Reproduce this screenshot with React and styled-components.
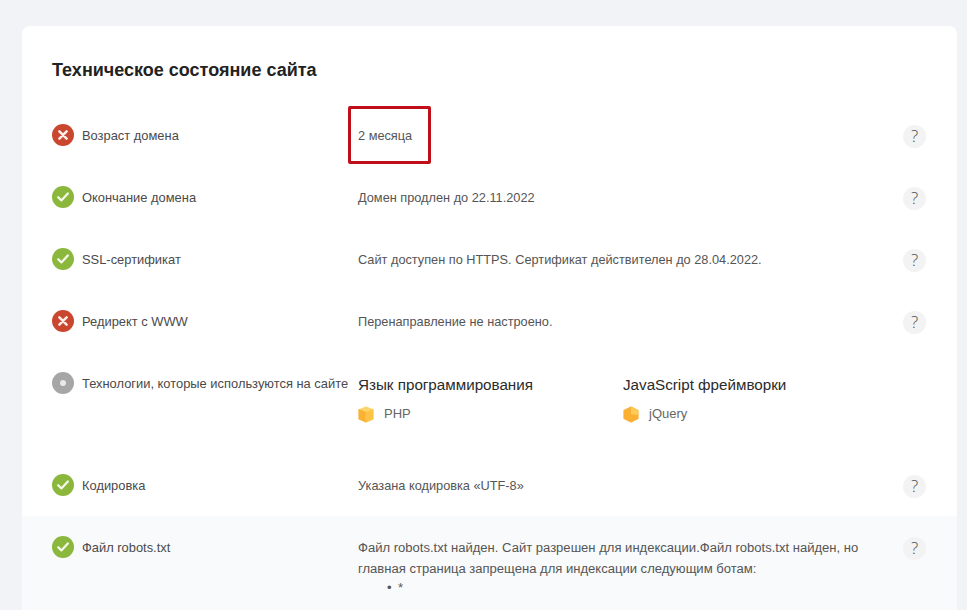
import styled, { createGlobalStyle } from 'styled-components'

const GlobalStyle = createGlobalStyle`
  html, body {
    margin: 0;
    height: 100%;
    overflow: hidden;
    background: #f1f3f6;
    font-family: 'Liberation Sans', Arial, sans-serif;
  }
`

const Page = styled.div`
  padding: 26px 10px 0 22px;
`

const Card = styled.section`
  background: #fff;
  border-radius: 8px 8px 0 0;
  padding-top: 34px;
  height: 584px;
  overflow: hidden;
`

const Title = styled.h2`
  margin: 0 30px 24px;
  height: 20px;
  font-size: 18px;
  line-height: 20px;
  font-weight: 700;
  color: #222;
`

const Row = styled.div`
  display: grid;
  grid-template-columns: 306px 1fr 24px;
  align-items: start;
  padding: 20px 30px;
  background: ${(p) => (p.$tinted ? '#f8fafb' : 'transparent')};
`

const Label = styled.div`
  display: flex;
  align-items: center;
  gap: 8px;
  font-size: 12.9px;
  color: #4a4a4a;
  white-space: nowrap;
`

const LabelText = styled.span`
  padding-top: 2px;
  line-height: 20px;
`

const StatusDot = styled.span`
  width: 22px;
  height: 22px;
  flex: none;
  border-radius: 50%;
  display: flex;
  align-items: center;
  justify-content: center;
  background: ${(p) => p.$color};
`

const Value = styled.div`
  position: relative;
  font-size: ${(p) => (p.$long ? '13.05px' : '12.75px')};
  line-height: 21px;
  color: #555;
  padding: 1px 20px 0 0;
`

const Bullets = styled.ul`
  margin: 0;
  padding-left: 29px;
  list-style: none;
  line-height: 17px;

  li {
    display: flex;
    gap: 6.5px;
  }

  li::before {
    content: '•';
  }
`

const Help = styled.span`
  width: 23px;
  height: 23px;
  margin: 1px 0 -2px;
  border-radius: 50%;
  background: #f3f3f3;
  color: #4f4f4f;
  display: flex;
  align-items: center;
  justify-content: center;
  font-family: 'Open Sans', 'Liberation Sans', sans-serif;
  font-weight: 300;
  font-size: 17px;
  line-height: 21px;
  padding-bottom: 2px;
  box-sizing: border-box;
`

const Marker = styled.span`
  position: absolute;
  left: -10px;
  top: -18px;
  width: 77px;
  height: 52px;
  border: 3px solid #c00f1a;
  border-radius: 2px;
`

const TechGrid = styled.div`
  display: grid;
  grid-template-columns: 265px 1fr;
  padding: 1px 0 10px;
`

const TechGroup = styled.div`
  display: flex;
  flex-direction: column;
  gap: 7px;
`

const TechTitle = styled.div`
  font-size: 15.2px;
  line-height: 24px;
  color: #2b2b2b;
`

const TechItem = styled.div`
  display: flex;
  align-items: center;
  gap: 10px;
  font-size: 13px;
  line-height: 20px;
  color: #666;
`

function StatusIcon({ status }) {
  if (status === 'ok') {
    return (
      <StatusDot $color="#8bb73c">
        <svg width="12" height="10" viewBox="0 0 12 10" fill="none">
          <path d="M1.2 5.2 4.4 8.4 10.8 1.4" stroke="#f4f8ea" strokeWidth="2.2" strokeLinecap="round" strokeLinejoin="round" />
        </svg>
      </StatusDot>
    )
  }
  if (status === 'fail') {
    return (
      <StatusDot $color="#c9472e">
        <svg width="10" height="10" viewBox="0 0 10 10" fill="none">
          <path d="M1.4 1.4 8.6 8.6M8.6 1.4 1.4 8.6" stroke="#fbeee9" strokeWidth="2.5" strokeLinecap="round" />
        </svg>
      </StatusDot>
    )
  }
  return (
    <StatusDot $color="#a6a6a6">
      <svg width="8" height="8" viewBox="0 0 8 8">
        <circle cx="4" cy="4" r="3" fill="#e9e9e9" />
      </svg>
    </StatusDot>
  )
}

function CubeIcon() {
  return (
    <svg width="16" height="17" viewBox="0 0 16 17" strokeLinejoin="round">
      <path d="M1 3.8 8 1 15 3.8 8 6.6Z" fill="#fdd56a" stroke="#fdd56a" strokeWidth="1.2" />
      <path d="M1 3.8 8 6.6V16L1 13Z" fill="#f9b233" stroke="#f9b233" strokeWidth="1.2" />
      <path d="M15 3.8 8 6.6V16L15 13Z" fill="#fcc445" stroke="#fcc445" strokeWidth="1.2" />
    </svg>
  )
}

function HexIcon() {
  return (
    <svg width="16" height="17" viewBox="0 0 16 17" strokeLinejoin="round">
      <path d="M8 1 15 4.6V12.4L8 16 1 12.4V4.6Z" fill="#fbb034" stroke="#fbb034" strokeWidth="1.2" />
      <path d="M8 1 15 4.6V9L8 8Z" fill="#fdcb57" />
    </svg>
  )
}

function App() {
  return (
    <Page>
      <GlobalStyle />
      <Card>
        <Title>Техническое состояние сайта</Title>

        <Row>
          <Label><StatusIcon status="fail" /><LabelText>Возраст домена</LabelText></Label>
          <Value>2 месяца<Marker /></Value>
          <Help>?</Help>
        </Row>
        <Row>
          <Label><StatusIcon status="ok" /><LabelText>Окончание домена</LabelText></Label>
          <Value>Домен продлен до 22.11.2022</Value>
          <Help>?</Help>
        </Row>
        <Row>
          <Label><StatusIcon status="ok" /><LabelText>SSL-сертификат</LabelText></Label>
          <Value>Сайт доступен по HTTPS. Сертификат действителен до 28.04.2022.</Value>
          <Help>?</Help>
        </Row>
        <Row>
          <Label><StatusIcon status="fail" /><LabelText>Редирект с WWW</LabelText></Label>
          <Value>Перенаправление не настроено.</Value>
          <Help>?</Help>
        </Row>
        <Row>
          <Label><StatusIcon status="info" /><LabelText>Технологии, которые используются на сайте</LabelText></Label>
          <TechGrid>
            <TechGroup>
              <TechTitle>Язык программирования</TechTitle>
              <TechItem><CubeIcon />PHP</TechItem>
            </TechGroup>
            <TechGroup>
              <TechTitle>JavaScript фреймворки</TechTitle>
              <TechItem><HexIcon />jQuery</TechItem>
            </TechGroup>
          </TechGrid>
        </Row>
        <Row>
          <Label><StatusIcon status="ok" /><LabelText>Кодировка</LabelText></Label>
          <Value>Указана кодировка «UTF-8»</Value>
          <Help>?</Help>
        </Row>
        <Row $tinted>
          <Label><StatusIcon status="ok" /><LabelText>Файл robots.txt</LabelText></Label>
          <Value $long>
            Файл robots.txt найден. Сайт разрешен для индексации.Файл robots.txt найден, но главная страница запрещена для индексации следующим ботам:
            <Bullets><li>*</li></Bullets>
          </Value>
          <Help>?</Help>
        </Row>
      </Card>
    </Page>
  )
}

export default App
